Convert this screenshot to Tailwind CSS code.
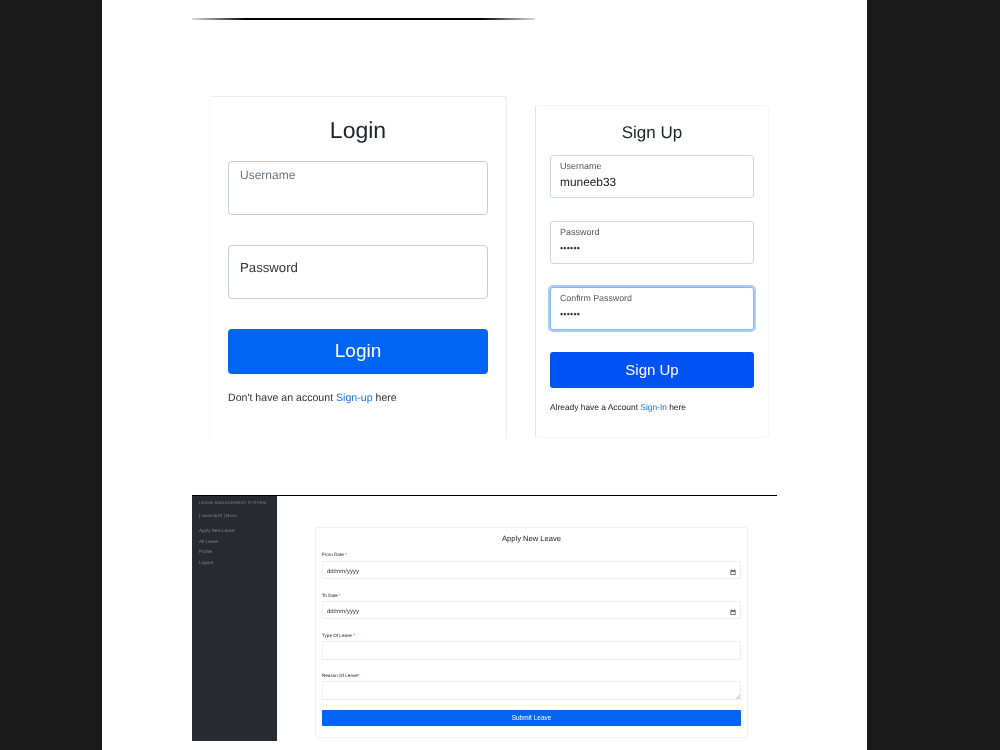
<!DOCTYPE html>
<html lang="en">
<head>
    <meta charset="UTF-8">
    <title>Leave Management System</title>
    <script src="https://cdn.jsdelivr.net/npm/@tailwindcss/browser@4"></script>
</head>
<body class="bg-[#1a1a1a] font-['Liberation_Sans',Arial,sans-serif] [text-rendering:geometricPrecision]">
    <div class="ml-[102px] w-[765px] h-[750px] overflow-hidden bg-white pl-[90px] pt-[18px]">
        <!-- Top rule -->
        <div class="w-[343px] h-[2px] [background-image:linear-gradient(to_right,#ddd,#000_16%,#000_84%,#ddd)]"></div>

        <div class="flex items-start mt-[76px] h-[342px] blur-[0.25px]">
            <!-- Login -->
            <div class="ml-[17px] w-[298px] h-[342px] border-t border-r border-l border-[#ededed] border-l-[#f8f8f8] px-[18px] rounded-t-[3px]">
                <h1 class="pt-[17px] h-[50px] text-center text-[23px] leading-[33px] text-[#212529]">Login</h1>
                <div class="mt-[14px] h-[54px] border border-[#c8ced8] rounded-[4px] pl-[11px] pt-[5px] text-[12px] leading-[16px] text-[#6c757d]">Username</div>
                <div class="mt-[30px] h-[54px] border border-[#c8ced8] rounded-[4px] pl-[11px] pt-[12px] text-[13.2px] leading-[20px] text-[#333]">Password</div>
                <button class="block mt-[30px] w-[260px] h-[45px] bg-[#0065f2] rounded-[4px] text-white text-[19px]">Login</button>
                <p class="mt-[17px] text-[10.6px] leading-[14px] text-[#333]">Don't have an account <a class="text-[#1a73f0]">Sign-up</a> here</p>
            </div>

            <!-- Sign up -->
            <div class="ml-[28px] mt-[9px] w-[234px] h-[333px] border border-[#f5f5f5] border-l-[#e2e2e2] rounded-[3px] px-[14px]">
                <h2 class="pt-[16px] h-[49px] text-center text-[17px] leading-[21px] text-[#212529]">Sign Up</h2>
                <div class="h-[43px] border border-[#cfd6df] rounded-[3px] pl-[9px] pt-[5px]">
                    <div class="text-[9px] leading-[11px] text-[#555]">Username</div>
                    <div class="mt-[2px] text-[11.9px] leading-[16px] text-[#222]">muneeb33</div>
                </div>
                <div class="mt-[23px] h-[43px] border border-[#cfd6df] rounded-[3px] pl-[9px] pt-[4px]">
                    <div class="text-[9px] leading-[12px] text-[#555]">Password</div>
                    <div class="mt-[3px] text-[9px] leading-[14px] tracking-[0.2px] text-[#333]">••••••</div>
                </div>
                <div class="mt-[23px] h-[43px] border border-[#86b7fe] ring-2 ring-[#a9cdfb] rounded-[3px] pl-[9px] pt-[4px]">
                    <div class="text-[8.8px] leading-[12px] text-[#555]">Confirm Password</div>
                    <div class="mt-[3px] text-[9px] leading-[14px] tracking-[0.2px] text-[#333]">••••••</div>
                </div>
                <button class="block mt-[22px] w-[204px] h-[36px] bg-[#0052f5] rounded-[3px] text-white text-[15px]">Sign Up</button>
                <p class="mt-[13px] text-[8.4px] leading-[12px] text-[#222]">Already have a Account <a class="text-[#1a6ff0]">Sign-In</a> here</p>
            </div>
        </div>

        <!-- Apply leave screenshot -->
        <div class="mt-[57px] w-[585px] border-t-[1.5px] border-black flex h-[246px] blur-[0.3px]">
            <div class="w-[85px] h-[245px] bg-[#272b30] pl-[7px] pt-[4px] text-[#7f8387]">
                <div class="text-[4.2px] leading-[5px] tracking-[0.2px]">LEAVE MANAGEMENT SYSTEM</div>
                <div class="mt-[8px] text-[4.4px] leading-[5px]">[ muneeb33 ] Menu</div>
                <ul class="mt-[10px] text-[4.6px] leading-[5px] flex flex-col gap-[5.5px]">
                    <li>Apply New Leave</li>
                    <li>All Leave</li>
                    <li>Profile</li>
                    <li>Logout</li>
                </ul>
            </div>
            <div class="pl-[38px] pt-[31px]">
                <div class="w-[433px] h-[211px] border border-[#f0f0f0] rounded-[2px] px-[6px] pt-[6px]">
                    <div class="text-center text-[7.6px] leading-[10px] text-[#222]">Apply New Leave</div>
                    <div class="mt-[7px] text-[4.6px] leading-[8px] text-[#222]">From Date <span class="text-red-500">*</span></div>
                    <div class="mt-[2px] h-[18px] border border-[#eeeeee] rounded-[1px] flex items-center justify-between pl-[4px] pr-[4px] text-[6px] text-[#333]">
                        <span class="mt-[5px]">dd/mm/yyyy</span>
                        <svg class="w-[6px] h-[6px] mt-[3px]" viewBox="0 0 16 16"><path fill="#555" d="M3 1h2v2h6V1h2v2h2v12H1V3h2zM3 7v6h10V7z"/></svg>
                    </div>
                    <div class="mt-[13px] text-[4.6px] leading-[8px] text-[#222]">To Date <span class="text-red-500">*</span></div>
                    <div class="mt-[1px] h-[18px] border border-[#eeeeee] rounded-[1px] flex items-center justify-between pl-[4px] pr-[4px] text-[6px] text-[#333]">
                        <span class="mt-[5px]">dd/mm/yyyy</span>
                        <svg class="w-[6px] h-[6px] mt-[3px]" viewBox="0 0 16 16"><path fill="#555" d="M3 1h2v2h6V1h2v2h2v12H1V3h2zM3 7v6h10V7z"/></svg>
                    </div>
                    <div class="mt-[13px] text-[4.6px] leading-[8px] text-[#222]">Type Of Leave <span class="text-red-500">*</span></div>
                    <div class="mt-[1px] h-[19px] border border-[#eeeeee] rounded-[1px]"></div>
                    <div class="mt-[12px] text-[4.6px] leading-[8px] text-[#222]">Reason Of Leave<span class="text-red-500">*</span></div>
                    <div class="mt-[1px] h-[19px] border border-[#eeeeee] rounded-[1px] flex items-end justify-end">
                        <svg class="w-[4px] h-[4px]" viewBox="0 0 4 4"><path stroke="#999" stroke-width="0.6" d="M0 4L4 0M2 4L4 2"/></svg>
                    </div>
                    <button class="block mt-[10px] w-[419px] h-[16px] bg-[#0065f2] rounded-[1px] text-white text-[6.5px]">Submit Leave</button>
                </div>
            </div>
        </div>
    </div>
</body>
</html>
